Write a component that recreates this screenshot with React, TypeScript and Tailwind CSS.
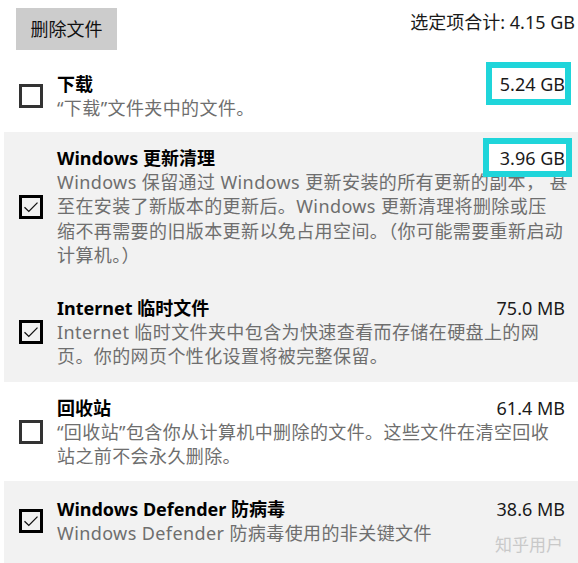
import type { ReactNode } from 'react'

type Item = {
  title: string
  size: string
  lines: string[]
  checked: boolean
  gray: boolean
  pad: string
  mark?: 'a' | 'b'
}

const ITEMS: Item[] = [
  { title: '下载', size: '5.24 GB', lines: ['“下载”文件夹中的文件。'], checked: false, gray: false, pad: 'pt-[16px] pb-[11px]', mark: 'a' },
  {
    title: 'Windows 更新清理', size: '3.96 GB', checked: true, gray: true, pad: 'pt-[14px] pb-[14px]', mark: 'b',
    lines: [
      'Windows 保留通过 Windows 更新安装的所有更新的副本， 甚',
      '至在安装了新版本的更新后。Windows 更新清理将删除或压',
      '缩不再需要的旧版本更新以免占用空间。（你可能需要重新启动',
      '计算机。）',
    ],
  },
  {
    title: 'Internet 临时文件', size: '75.0 MB', checked: true, gray: true, pad: 'pt-[14px] pb-[13px]',
    lines: ['Internet 临时文件夹中包含为快速查看而存储在硬盘上的网', '页。你的网页个性化设置将被完整保留。'],
  },
  {
    title: '回收站', size: '61.4 MB', checked: false, gray: false, pad: 'pt-[14px] pb-[12px]',
    lines: ['“回收站”包含你从计算机中删除的文件。这些文件在清空回收', '站之前不会永久删除。'],
  },
  {
    title: 'Windows Defender 防病毒', size: '38.6 MB', checked: true, gray: true, pad: 'pt-[16px] pb-[20px]',
    lines: ['Windows Defender 防病毒使用的非关键文件'],
  },
]

function Checkbox({ checked }: { checked: boolean }) {
  return (
    <span className={`w-6 h-6 shrink-0 flex items-center justify-center border-[3px] ${checked ? 'border-black' : 'border-[#333333]'}`}>
      {checked && (
        <svg width="18" height="18" viewBox="0 0 18 18" fill="none">
          <path d="M2.5 9.2 L6.8 13.4 L15.5 4.6" stroke="#111" strokeWidth="1.3" />
        </svg>
      )}
    </span>
  )
}

function Size({ text, mark }: { text: string; mark?: 'a' | 'b' }) {
  return (
    <span className="relative shrink-0 text-[18px] leading-6 text-[#1a1a1a]">
      {mark === 'a' && <span className="absolute -left-[14px] -right-[6px] -top-[10px] -bottom-[9px] border-[6px] border-[#1fd5da] bg-white" />}
      {mark === 'b' && <span className="absolute -left-[17px] -right-[7px] -top-[8px] -bottom-[7px] border-[6px] border-[#1fd5da] bg-white" />}
      <span className="relative">{text}</span>
    </span>
  )
}

function Desc({ lines }: { lines: string[] }): ReactNode {
  return (
    <p className="text-[18px] leading-[24.5px] tracking-[0.4px] text-[#6e6e6e] whitespace-nowrap">
      {lines.map((l, i) => (
        <span key={i} className="block">{l}</span>
      ))}
    </p>
  )
}

export default function App() {
  return (
    <div className="w-[578px] h-[563px] overflow-hidden bg-white font-['Segoe_UI','Noto_Sans','Noto_Sans_CJK_SC',sans-serif]">
      <div className="flex justify-between items-start pt-2 pl-4 pr-[3px] mb-1.5">
        <button className="w-[101px] h-[42px] bg-[#cccccc] text-[18px] text-[#111]">删除文件</button>
        <span className="mt-[2px] text-[18px] leading-6 text-[#1a1a1a]">选定项合计: 4.15 GB</span>
      </div>
      {ITEMS.map(item => (
        <div key={item.title} className={`relative ml-1 pl-[15px] pr-[13px] flex items-center gap-[14px] ${item.pad} ${item.gray ? 'bg-[#f2f2f2]' : ''}`}>
          <Checkbox checked={item.checked} />
          <div className="flex-1 min-w-0">
            <div className="flex justify-between items-center">
              <span className="text-[18px] leading-6 font-bold text-black">{item.title}</span>
              <Size text={item.size} mark={item.mark} />
            </div>
            <Desc lines={item.lines} />
          </div>
          {item.title.startsWith('Windows Defender') && (
            <span className="absolute right-[15px] top-[52px] text-[17px] leading-6 text-[#c9c9c9]">知乎用户</span>
          )}
        </div>
      ))}
    </div>
  )
}
